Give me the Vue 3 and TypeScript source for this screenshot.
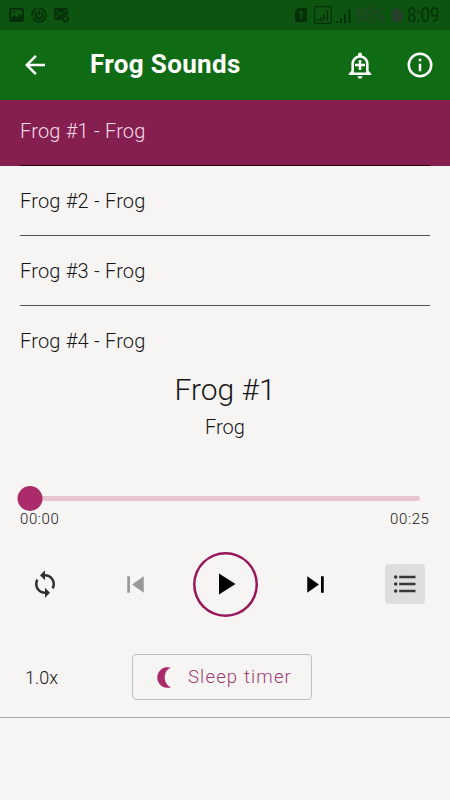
<script setup lang="ts">
import { ref } from 'vue'

interface Track {
  id: number
  title: string
  artist: string
}

const tracks: Track[] = [1, 2, 3, 4].map((id) => ({ id, title: `Frog #${id}`, artist: 'Frog' }))
const current = ref<Track>(tracks[0])
const progress = ref(0)
</script>

<template>
  <div class="screen">
    <div class="status">
      <div class="status-left">
        <svg width="15" height="14" viewBox="0 0 15 14">
          <path fill="currentColor" fill-rule="evenodd" d="M1.500 0h12Q15 0 15 1.500v11Q15 14 13.500 14h-12Q0 14 0 12.500v-11Q0 0 1.500 0zM2 2v8l3-3 3 2.500 3-4 2 3V2zM4 3h2v2H4z" />
        </svg>
        <svg width="16" height="16" viewBox="0 0 16 16" fill="none" stroke="currentColor">
          <circle cx="8" cy="8" r="6.900" stroke-width="1.600" stroke-dasharray="18 2 10 2" />
          <path d="M5.700 5.300A3.600 3.600 0 1 0 10.300 5.300M8 3v5" stroke-width="2" />
        </svg>
        <svg width="16" height="15" viewBox="0 0 16 15">
          <path fill="currentColor" d="M0 0h14v7h-3l-3 2v3H0z" />
          <path d="M1 2l6 4 6-4M1 10l4-4" fill="none" stroke="#0c5410" stroke-width="1.300" />
          <circle cx="11.500" cy="11" r="2.400" fill="none" stroke="currentColor" stroke-width="1.400" />
          <circle cx="11.500" cy="11" r="3.500" fill="none" stroke="currentColor" stroke-dasharray="1.200 1.550" />
        </svg>
      </div>
      <div class="status-right">
        <svg class="sim" width="12" height="14" viewBox="0 0 12 14">
          <path fill="currentColor" d="M3 0h8q1 0 1 1v12q0 1-1 1H1q-1 0-1-1V3z" />
          <path d="M4 5l2.300-1.500V11" fill="none" stroke="#0c5410" stroke-width="1.600" />
        </svg>
        <svg class="boxed" width="18" height="18" viewBox="0 0 18 18">
          <rect x=".6" y=".6" width="16.800" height="16.800" rx="1.500" fill="none" stroke="currentColor" stroke-width="1.200" />
          <path fill="currentColor" d="M3 13h1.500v2H3zM6 11h1.500v4H6zM9 8h1.500v7H9zM12.500 4H14v11h-1.500z" />
        </svg>
        <svg class="signal" width="15" height="15" viewBox="0 0 15 15">
          <path fill="currentColor" d="M0 13h2v2H0zM4 10h2v5H4zM8 6h2v9H8zM12.500 1h2v14h-2z" />
        </svg>
        <span class="percent"><span>88%</span></span>
        <svg class="battery" width="10" height="14" viewBox="0 0 10 14">
          <path fill="currentColor" d="M3 0h4v1.500h2q1 0 1 1V13q0 1-1 1H1q-1 0-1-1V2.500q0-1 1-1h2z" />
        </svg>
        <span class="clock"><span>8:09</span></span>
      </div>
    </div>

    <header class="toolbar">
      <svg width="30" height="30" viewBox="0 0 24 24" fill="currentColor">
        <path d="M20 11H7.830l5.590-5.590L12 4l-8 8 8 8 1.410-1.410L7.830 13H20z" />
      </svg>
      <h1>Frog Sounds</h1>
      <svg class="bell" width="30" height="30" viewBox="0 0 24 24" fill="currentColor">
        <path fill-rule="evenodd" d="M10.010 21.010c0 1.100.89 1.990 1.990 1.990s1.990-.89 1.990-1.990zM18.880 16.820V11c0-3.250-2.250-5.970-5.290-6.690v-.72a1.590 1.590 0 0 0-3.180 0v.72C7.370 5.030 5.120 7.750 5.120 11v5.820L3 18.940V20h18v-1.060zM16.880 18H7.120v-7a4.880 4.880 0 0 1 9.760 0z" />
        <path d="M11 8h2v3h3v2h-3v3h-2v-3H8v-2h3z" />
      </svg>
      <svg width="30" height="30" viewBox="0 0 24 24" fill="currentColor">
        <path d="M11 7h2v2h-2zm0 4h2v6h-2zm1-9a10 10 0 1 0 0 20 10 10 0 0 0 0-20zm0 18a8 8 0 1 1 0-16 8 8 0 0 1 0 16z" />
      </svg>
    </header>

    <ul class="list">
      <li v-for="t in tracks" :key="t.id" :class="{ active: t.id === current.id }" @click="current = t">
        <span>{{ t.title }} - {{ t.artist }}</span>
      </li>
    </ul>

    <section class="player">
      <h2>{{ current.title }}</h2>
      <p class="artist">{{ current.artist }}</p>

      <div class="track">
        <div class="thumb" :style="{ marginLeft: progress + '%' }"></div>
      </div>
      <div class="times"><span>00:00</span><span>00:25</span></div>

      <div class="controls">
        <svg width="30" height="30" viewBox="0 0 24 24" fill="#303030">
          <path d="M12 4V1L8 5l4 4V6c3.310 0 6 2.690 6 6 0 1.010-.25 1.970-.7 2.800l1.460 1.460C19.540 15.030 20 13.570 20 12c0-4.420-3.580-8-8-8zm0 14c-3.310 0-6-2.690-6-6 0-1.010.25-1.970.7-2.800L5.240 7.740C4.460 8.970 4 10.430 4 12c0 4.420 3.580 8 8 8v3l4-4-4-4z" />
        </svg>
        <svg width="33" height="33" viewBox="0 0 24 24" fill="#999">
          <path d="M6 6h2v12H6zm3.500 6l8.500 6V6z" />
        </svg>
        <button class="play">
          <svg width="36" height="36" viewBox="0 0 24 24"><path d="M8 5v14l11-7z" /></svg>
        </button>
        <svg width="33" height="33" viewBox="0 0 24 24">
          <path d="M6 18l8.500-6L6 6zM16 6v12h2V6z" />
        </svg>
        <button class="queue">
          <svg width="28" height="28" viewBox="0 0 24 24" fill="#383838">
            <circle cx="4" cy="6" r="1.500" /><circle cx="4" cy="12" r="1.500" /><circle cx="4" cy="18" r="1.500" />
            <path d="M7 5h14v2H7zM7 11h14v2H7zM7 17h14v2H7z" />
          </svg>
        </button>
      </div>

      <div class="options">
        <span class="speed">1.0x</span>
        <button class="sleep">
          <svg width="14" height="21" viewBox="0 0 14 21">
            <path fill="#a92b69" d="M14 .8A10.300 10.300 0 1 0 14 20.200C5.600 17.300 5.600 3.700 14 .8z" />
          </svg>
          <span>Sleep timer</span>
        </button>
      </div>
    </section>
  </div>
</template>

<style>
body {
  background: #f7f5f4;
}
</style>

<style scoped>
.screen {
  width: 450px;
  height: 800px;
  display: flex;
  flex-direction: column;
  overflow: hidden;
  background: #f7f5f4;
  color: #161616;
  font-family: Roboto, sans-serif;
  font-weight: 300;
}
svg {
  display: block;
  flex: none;
}
button {
  padding: 0;
  font: inherit;
  color: inherit;
  background: none;
}
.status {
  height: 30px;
  display: flex;
  justify-content: space-between;
  align-items: center;
  padding: 0 11px 0 9px;
  background: #0c5410;
  color: #06300a;
}
.status-left,
.status-right {
  display: flex;
  align-items: center;
}
.status-left {
  gap: 7px;
}
.boxed {
  margin-left: 7px;
}
.signal {
  margin-left: 4px;
}
.percent,
.clock {
  font-size: 20px;
  font-weight: 400;
  line-height: 30px;
  white-space: nowrap;
}
.percent span,
.clock span {
  display: block;
  transform: scaleX(0.84);
  transform-origin: left;
}
.percent {
  width: 31px;
  margin-left: 5px;
  color: #27452a;
}
.percent span {
  transform: scaleX(0.77);
}
.battery {
  margin-left: 5px;
  color: #27402a;
}
.clock {
  width: 32px;
  margin-left: 5px;
}
.toolbar {
  height: 70px;
  display: flex;
  align-items: center;
  padding: 0 15px 0 20px;
  background: #0f6b14;
  color: #fff;
}
.toolbar h1 {
  flex: 1;
  margin: -2px 0 0 40px;
  font-size: 26px;
  font-weight: 700;
  letter-spacing: 0.35px;
}
.bell {
  margin-right: 30px;
}
.list {
  height: 260px;
  margin: 0;
  padding: 0;
  overflow: hidden;
  list-style: none;
}
.list li {
  box-sizing: border-box;
  height: 70px;
  padding: 0 20px;
  font-size: 20px;
  line-height: 70px;
}
.list li span {
  display: block;
  height: 69px;
  border-bottom: 1px solid #555353;
  letter-spacing: 0.200px;
}
.list li.active {
  height: 66px;
  background: #841f50;
  color: #f8dbe9;
  line-height: 62px;
}
.list li.active span {
  height: 65px;
  border-color: #25000f;
}
.player {
  height: 357px;
  border-bottom: 1px solid #a8a7a6;
}
.player h2 {
  margin: 10px 0 0;
  text-align: center;
  font-size: 30px;
  font-weight: 300;
  line-height: 40px;
}
.artist {
  margin: 4px 0 0;
  text-align: center;
  font-size: 20px;
  line-height: 26px;
}
.track {
  height: 5px;
  margin: 55.500px 30px 0;
  display: flex;
  align-items: center;
  border-radius: 3px;
  background: #e4c5d1;
}
.thumb {
  width: 25px;
  height: 25px;
  border-radius: 50%;
  background: #ab2c6a;
  transform: translateX(-50%);
}
.times {
  display: flex;
  justify-content: space-between;
  margin-top: 8.500px;
  padding: 0 20.500px 0 20px;
  font-size: 15px;
  line-height: 20px;
  letter-spacing: 0.600px;
}
.controls {
  height: 66px;
  margin-top: 22px;
  display: grid;
  grid-template-columns: repeat(5, 90px);
  place-items: center;
}
.play {
  box-sizing: border-box;
  width: 65px;
  height: 65px;
  display: grid;
  place-items: center;
  border: 0;
  box-shadow: inset 0 0 0 2.500px #98185b;
  border-radius: 50%;
}
.queue {
  width: 40px;
  height: 40px;
  display: grid;
  place-items: center;
  border: 0;
  border-radius: 4px;
  background: #dededd;
}
.options {
  display: flex;
  align-items: center;
  margin-top: 37px;
}
.speed {
  width: 107px;
  padding-left: 25px;
  font-size: 18px;
}
.sleep {
  box-sizing: border-box;
  width: 179.500px;
  height: 46px;
  display: flex;
  align-items: center;
  gap: 17px;
  padding-left: 24px;
  border: 1px solid #c3c1c0;
  border-radius: 4px;
  color: #a03a70;
  font-size: 18.500px;
  letter-spacing: 1.150px;
}
</style>
